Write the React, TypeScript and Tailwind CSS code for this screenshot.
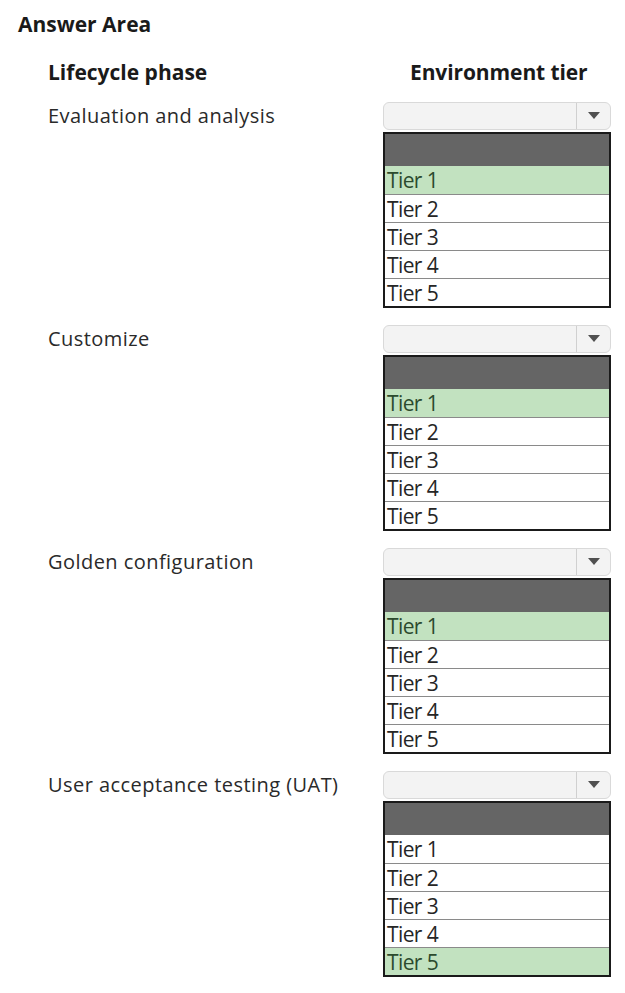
const groups = [
  { phase: "Evaluation and analysis", selected: 1 },
  { phase: "Customize", selected: 1 },
  { phase: "Golden configuration", selected: 1 },
  { phase: "User acceptance testing (UAT)", selected: 5 },
];

const tiers = [1, 2, 3, 4, 5];

function TierDropdown({ selected }: { selected: number }) {
  return (
    <div className="flex w-[228px] flex-col gap-[2px]">
      <div className="flex h-[28px] items-stretch rounded-[6px] border border-[#d9d9d9] bg-[#f3f3f3]">
        <div className="flex-1" />
        <div className="flex w-[34px] items-center justify-center border-l border-[#d0d0d0]">
          <svg width="12" height="8" viewBox="0 0 12 8">
            <path d="M0 0 L12 0 L6 7 Z" fill="#505050" />
          </svg>
        </div>
      </div>
      <div className="flex flex-col border-2 border-[#1a1a1a] bg-white">
        <div className="h-[32px] bg-[#656565]" />
        {tiers.map((t) => (
          <div
            key={t}
            className={[
              "flex h-[28px] items-center border-t border-[#8a8a8a] pl-[2px] text-[21px] leading-[26px] tracking-[-0.6px]",
              t === 1 ? "border-t-0" : "",
              t === selected ? "bg-[#c2e2c0] text-[#2c4a2e]" : "text-[#262626]",
            ].join(" ")}
          >
            Tier {t}
          </div>
        ))}
      </div>
    </div>
  );
}

export default function App() {
  return (
    <main
      className="min-h-[993px] w-[625px] bg-white text-[#262626]"
      style={{ fontFamily: '"Open Sans", "Noto Sans", sans-serif' }}
    >
      <div className="px-[18px] pt-[10px]">
        <h1 className="text-[21px] font-bold leading-[28px] text-[#1a1a1a]">
          Answer Area
        </h1>
      </div>

      <div className="mt-[20px] flex pl-[48px]">
        <div className="w-[335px] text-[21px] font-bold leading-[28px] text-[#1a1a1a]">
          Lifecycle phase
        </div>
        <div className="w-[228px] pl-[27px] text-[21px] font-bold leading-[28px] tracking-[-0.1px] text-[#1a1a1a]">
          Environment tier
        </div>
      </div>

      <div className="mt-[16px] flex flex-col gap-[17px] pl-[48px]">
        {groups.map((g) => (
          <div key={g.phase} className="flex items-start">
            <div className="flex h-[28px] w-[335px] items-center text-[20px] leading-[28px] tracking-[0.45px] text-[#2a2a2a]">
              {g.phase}
            </div>
            <TierDropdown selected={g.selected} />
          </div>
        ))}
      </div>
    </main>
  );
}
